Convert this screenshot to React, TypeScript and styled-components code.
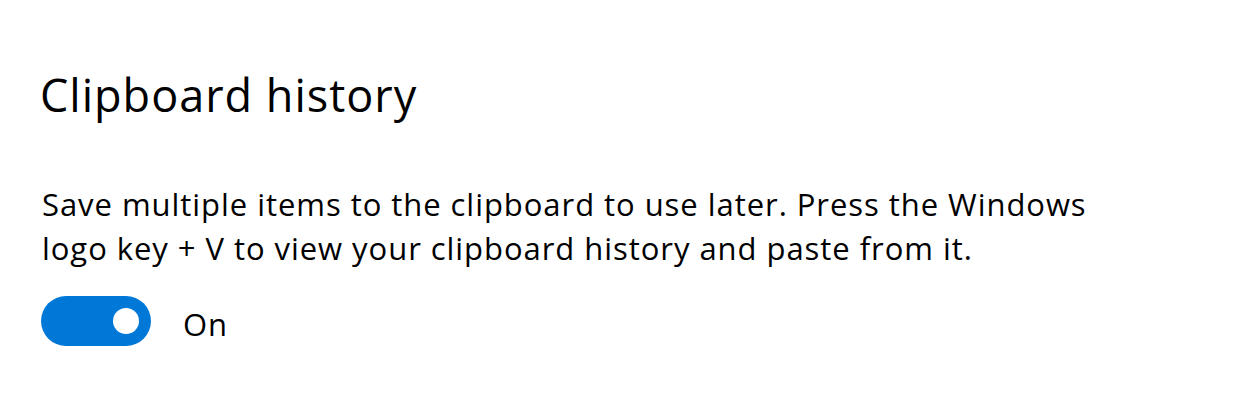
import React from "react";
import styled, { createGlobalStyle } from "styled-components";

const GlobalStyle = createGlobalStyle`
  html, body {
    margin: 0;
    padding: 0;
    background: #ffffff;
  }
  body {
    font-family: "Open Sans", "Noto Sans", sans-serif;
    color: #000000;
  }
`;

const Page = styled.div`
  width: 1235px;
  height: 410px;
  box-sizing: border-box;
  padding: 65px 0 0 40px;
  display: flex;
  flex-direction: column;
`;

const Title = styled.h1`
  margin: 0;
  font-size: 45px;
  font-weight: 400;
  line-height: 60px;
  letter-spacing: 1px;
`;

const Description = styled.p`
  margin: 57px 0 0 2px;
  max-width: 1100px;
  font-size: 31px;
  line-height: 44px;
  font-weight: 400;
  letter-spacing: 0.95px;
`;

const ToggleRow = styled.div`
  display: flex;
  align-items: center;
  gap: 32px;
  margin-top: 26px;
  margin-left: 1px;
`;

const Track = styled.button<{ $on: boolean }>`
  width: 110px;
  height: 50px;
  border: none;
  padding: 0 12px;
  border-radius: 25px;
  background: ${(p) => (p.$on ? "#0078d7" : "#ffffff")};
  display: flex;
  align-items: center;
  justify-content: ${(p) => (p.$on ? "flex-end" : "flex-start")};
  cursor: pointer;
`;

const Knob = styled.span`
  width: 26px;
  height: 26px;
  border-radius: 50%;
  background: #ffffff;
`;

const ToggleLabel = styled.span`
  font-size: 31px;
  line-height: 40px;
  letter-spacing: 0.95px;
  margin-top: 6px;
`;

export default function App() {
  const [on, setOn] = React.useState(true);
  return (
    <>
      <GlobalStyle />
      <Page>
        <Title>Clipboard history</Title>
        <Description>
          Save multiple items to the clipboard to use later. Press the Windows
          logo key + V to view your clipboard history and paste from it.
        </Description>
        <ToggleRow>
          <Track $on={on} onClick={() => setOn(!on)} aria-label="Clipboard history">
            <Knob />
          </Track>
          <ToggleLabel>{on ? "On" : "Off"}</ToggleLabel>
        </ToggleRow>
      </Page>
    </>
  );
}
